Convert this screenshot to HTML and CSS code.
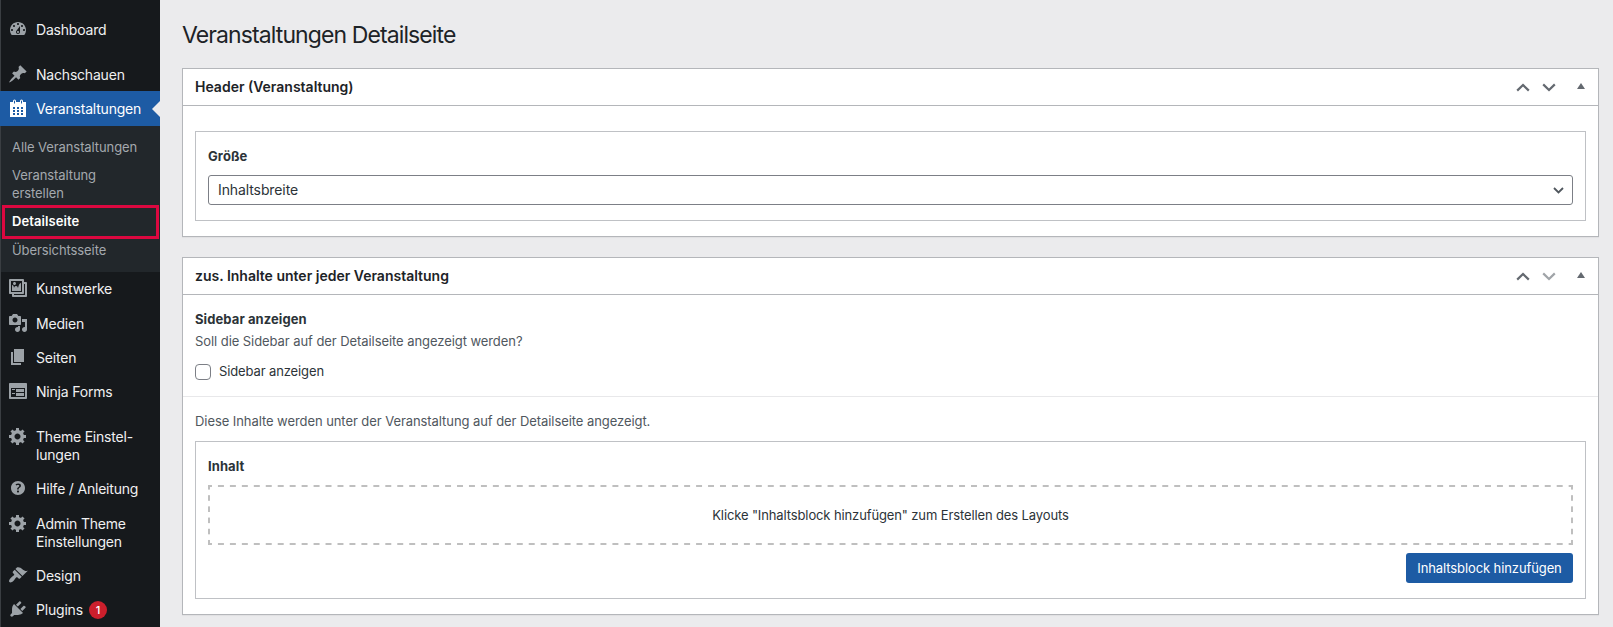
FILE: index.html
```html
<!DOCTYPE html>
<html lang="de">
<head>
  <meta charset="UTF-8">
  <title>Veranstaltungen Detailseite</title>
  <link rel="stylesheet" href="styles.css">
</head>
<body>

  <nav class="admin-menu">
    <ul class="menu">
      <li class="menu-item">
        <svg class="icon" viewBox="0 0 20 20"><path d="M3.76 16h12.48c1.1-1.37 1.76-3.11 1.76-5 0-4.42-3.58-8-8-8s-8 3.58-8 8c0 1.89.66 3.63 1.76 5zM10 4c.55 0 1 .45 1 1s-.45 1-1 1-1-.45-1-1 .45-1 1-1zM6 6c.55 0 1 .45 1 1s-.45 1-1 1-1-.45-1-1 .45-1 1-1zm8 0c.55 0 1 .45 1 1s-.45 1-1 1-1-.45-1-1 .45-1 1-1zm-5.37 5.55L12 7v6c0 1.1-.9 2-2 2s-2-.9-2-2c0-.57.24-1.08.63-1.45zM4 10c.55 0 1 .45 1 1s-.45 1-1 1-1-.45-1-1 .45-1 1-1zm12 0c.55 0 1 .45 1 1s-.45 1-1 1-1-.45-1-1 .45-1 1-1zm-5 3c0-.55-.45-1-1-1s-1 .45-1 1 .45 1 1 1 1-.45 1-1z"/></svg>
        <span>Dashboard</span>
      </li>
      <li class="separator small"></li>
      <li class="menu-item">
        <svg class="icon" viewBox="0 0 20 20"><path d="M10.44 3.02l1.82-1.82 6.36 6.35-1.83 1.82c-1.05-.68-2.48-.57-3.41.36l-.75.75c-.92.93-1.04 2.35-.35 3.41l-1.83 1.82-2.41-2.41-2.8 2.79c-.42.42-3.38 2.71-3.8 2.29s1.86-3.39 2.28-3.81l2.79-2.79L4.1 9.36l1.83-1.82c1.05.69 2.48.57 3.4-.36l.75-.75c.93-.92 1.05-2.35.36-3.41z"/></svg>
        <span>Nachschauen</span>
      </li>
      <li class="menu-item current">
        <svg class="icon" viewBox="0 0 20 20"><path fill-rule="evenodd" d="M15 4h3v15H2V4h3V3a1.5 1.5 0 0 1 3 0v1h4V3a1.5 1.5 0 0 1 3 0zM6 3v2.5h1V3a.5.5 0 0 0-1 0zm7 0v2.5h1V3a.5.5 0 0 0-1 0zM5 9h2v2H5zm4 0h2v2H9zm4 0h2v2h-2zM5 12h2v2H5zm4 0h2v2H9zm4 0h2v2h-2zM5 15h2v2H5zm4 0h2v2H9zm4 0h2v2h-2z"/></svg>
        <span>Veranstaltungen</span>
      </li>
    </ul>
    <ul class="submenu">
      <li>Alle Veranstaltungen</li>
      <li>Veranstaltung<br>erstellen</li>
      <li class="active">Detailseite</li>
      <li>Übersichtsseite</li>
    </ul>
    <ul class="menu">
      <li class="menu-item">
        <svg class="icon" viewBox="0 0 20 20"><path d="M16 4h1.96c.57 0 1.04.47 1.04 1.04v12.92c0 .57-.47 1.04-1.04 1.04H5.04C4.47 19 4 18.53 4 17.96V16H2.04C1.47 16 1 15.53 1 14.96V2.04C1 1.47 1.47 1 2.04 1h12.92c.57 0 1.04.47 1.04 1.04V4zM3 14h11V3H3v11zm5-8.5C8 4.67 7.33 4 6.5 4S5 4.67 5 5.5 5.67 7 6.5 7 8 6.33 8 5.5zm2 4.5s1-5 3-5v8H4V7c2 0 2 3 2 3s.33-2 2-2 2 2 2 2zm7 7V6h-1v8.96c0 .57-.47 1.04-1.04 1.04H6v1h11z"/></svg>
        <span>Kunstwerke</span>
      </li>
      <li class="menu-item">
        <svg class="icon" viewBox="0 0 20 20"><path d="M13 11V4c0-.55-.45-1-1-1h-1.67L9 1H5L3.67 3H2c-.55 0-1 .45-1 1v7c0 .55.45 1 1 1h10c.55 0 1-.45 1-1zM7 4.5c1.38 0 2.5 1.12 2.5 2.5S8.38 9.5 7 9.5 4.5 8.38 4.5 7 5.62 4.5 7 4.5zM14 6h5v10.5c0 1.38-1.12 2.5-2.5 2.5S14 17.88 14 16.5s1.12-2.5 2.5-2.5c.17 0 .34.02.5.05V9h-3V6zm-4 8.05V13h2v3.5c0 1.38-1.12 2.5-2.5 2.5S7 17.88 7 16.5 8.12 14 9.5 14c.17 0 .34.02.5.05z"/></svg>
        <span>Medien</span>
      </li>
      <li class="menu-item">
        <svg class="icon" viewBox="0 0 20 20"><path d="M6 15V2h10v13H6zm-1 1h8v2H3V5h2v11z"/></svg>
        <span>Seiten</span>
      </li>
      <li class="menu-item">
        <svg class="icon" viewBox="0 0 20 20"><path d="M2 2h16c.55 0 1 .45 1 1v14c0 .55-.45 1-1 1H2c-.55 0-1-.45-1-1V3c0-.55.45-1 1-1zm15 14V7H3v9h14zM4 8v1h3V8H4zm4 0v3h8V8H8zm-4 4v1h3v-1H4zm4 0v3h8v-3H8z"/></svg>
        <span>Ninja Forms</span>
      </li>
      <li class="separator"></li>
      <li class="menu-item">
        <svg class="icon" viewBox="0 0 20 20"><path d="M18 12h-2.18c-.17.7-.44 1.35-.81 1.93l1.54 1.54-2.1 2.1-1.54-1.54c-.58.36-1.23.63-1.91.79V19H8v-2.18c-.68-.16-1.33-.43-1.91-.79l-1.54 1.54-2.12-2.12 1.54-1.54c-.36-.58-.63-1.23-.79-1.91H1V9.03h2.17c.16-.7.44-1.35.8-1.94L2.43 5.55l2.1-2.1 1.54 1.54c.58-.37 1.24-.64 1.93-.81V2h3v2.18c.68.16 1.33.43 1.91.79l1.54-1.54 2.12 2.12-1.54 1.54c.36.59.64 1.24.8 1.94H18V12zm-8.5 1.5c1.66 0 3-1.34 3-3s-1.34-3-3-3-3 1.34-3 3 1.34 3 3 3z"/></svg>
        <span>Theme Einstel-<br>lungen</span>
      </li>
      <li class="menu-item">
        <svg class="icon" viewBox="0 0 20 20"><path d="M17 10c0-3.87-3.14-7-7-7-3.87 0-7 3.13-7 7s3.13 7 7 7c3.86 0 7-3.13 7-7zm-6.3 1.48H9.14v-.43c0-.38.08-.7.24-.98s.46-.57.88-.89c.41-.29.68-.53.81-.71.14-.18.2-.39.2-.62 0-.25-.09-.44-.28-.58-.19-.13-.45-.19-.79-.19-.58 0-1.25.15-2 .46l-.64-1.28c.87-.49 1.8-.74 2.77-.74.81 0 1.45.2 1.92.58.48.39.71.91.71 1.55 0 .43-.09.8-.29 1.11-.19.32-.57.67-1.11 1.06-.38.28-.61.49-.71.63-.1.15-.15.34-.15.57v.46zm-1.47 2.74c-.18-.17-.27-.42-.27-.73 0-.33.08-.58.26-.75s.43-.25.77-.25c.32 0 .57.09.75.26s.27.42.27.74c0 .3-.09.55-.27.72-.18.18-.43.27-.75.27-.33 0-.58-.09-.76-.26z"/></svg>
        <span>Hilfe / Anleitung</span>
      </li>
      <li class="menu-item">
        <svg class="icon" viewBox="0 0 20 20"><path d="M18 12h-2.18c-.17.7-.44 1.35-.81 1.93l1.54 1.54-2.1 2.1-1.54-1.54c-.58.36-1.23.63-1.91.79V19H8v-2.18c-.68-.16-1.33-.43-1.91-.79l-1.54 1.54-2.12-2.12 1.54-1.54c-.36-.58-.63-1.23-.79-1.91H1V9.03h2.17c.16-.7.44-1.35.8-1.94L2.43 5.55l2.1-2.1 1.54 1.54c.58-.37 1.24-.64 1.93-.81V2h3v2.18c.68.16 1.33.43 1.91.79l1.54-1.54 2.12 2.12-1.54 1.54c.36.59.64 1.24.8 1.94H18V12zm-8.5 1.5c1.66 0 3-1.34 3-3s-1.34-3-3-3-3 1.34-3 3 1.34 3 3 3z"/></svg>
        <span>Admin Theme<br>Einstellungen</span>
      </li>
      <li class="menu-item">
        <svg class="icon" viewBox="0 0 20 20"><path d="M14.48 11.06L7.41 3.99l1.5-1.5c.5-.56 2.3-.47 3.51.32 1.21.8 1.43 1.28 2.91 2.1 1.18.64 2.45 1.26 4.45.85zm-.71.71L6.7 4.7 4.93 6.47c-.39.39-.39 1.02 0 1.41l1.06 1.06c.39.39.39 1.03 0 1.42-.6.6-1.43 1.11-2.21 1.69-.35.26-.7.53-1.01.84C1.43 14.23.4 16.08 1.4 17.07c.99 1 2.84-.03 4.18-1.36.31-.31.58-.66.85-1.02.57-.78 1.08-1.61 1.69-2.21.39-.39 1.02-.39 1.41 0l1.06 1.06c.39.39 1.02.39 1.41 0z"/></svg>
        <span>Design</span>
      </li>
      <li class="menu-item">
        <svg class="icon" viewBox="0 0 20 20"><path d="M13.11 4.36L9.87 7.6 8 5.73l3.24-3.24c.35-.34 1.05-.2 1.56.32.52.51.66 1.21.31 1.55zm-8 1.77l.91-1.12 9.01 9.01-1.19.84c-.71.71-2.63 1.16-3.82 1.16H6.14L4.9 17.26c-.59.59-1.54.59-2.12 0-.59-.58-.59-1.53 0-2.12l1.24-1.24v-3.88c0-1.13.4-3.19 1.09-3.89zm7.26 3.97l3.24-3.24c.34-.35 1.04-.21 1.55.31.52.51.66 1.21.31 1.55l-3.24 3.25z"/></svg>
        <span>Plugins</span>
        <b class="badge">1</b>
      </li>
    </ul>
  </nav>

  <main class="content">
    <h1>Veranstaltungen Detailseite</h1>

    <section class="postbox">
      <header class="postbox-header">
        <h2>Header (Veranstaltung)</h2>
        <div class="handles">
          <svg viewBox="0 0 14 9"><path d="M1.2 7.6L7 2l5.8 5.6"/></svg>
          <svg viewBox="0 0 14 9"><path d="M1.2 1.4L7 7l5.8-5.6"/></svg>
          <i class="toggle"></i>
        </div>
      </header>
      <div class="group group-first">
        <strong class="field-label">Größe</strong>
        <div class="select">
          <span>Inhaltsbreite</span>
          <svg viewBox="0 0 11 7"><path d="M1 1l4.5 4.5L10 1"/></svg>
        </div>
      </div>
    </section>

    <section class="postbox">
      <header class="postbox-header">
        <h2>zus. Inhalte unter jeder Veranstaltung</h2>
        <div class="handles">
          <svg viewBox="0 0 14 9"><path d="M1.2 7.6L7 2l5.8 5.6"/></svg>
          <svg class="disabled" viewBox="0 0 14 9"><path d="M1.2 1.4L7 7l5.8-5.6"/></svg>
          <i class="toggle"></i>
        </div>
      </header>
      <div class="field">
        <strong class="field-label">Sidebar anzeigen</strong>
        <p class="description">Soll die Sidebar auf der Detailseite angezeigt werden?</p>
        <label class="check"><input type="checkbox"><span>Sidebar anzeigen</span></label>
      </div>
      <p class="description note">Diese Inhalte werden unter der Veranstaltung auf der Detailseite angezeigt.</p>
      <div class="group">
        <strong class="field-label">Inhalt</strong>
        <div class="dropzone">Klicke "Inhaltsblock hinzufügen" zum Erstellen des Layouts</div>
        <div class="actions"><button class="btn">Inhaltsblock hinzufügen</button></div>
      </div>
    </section>
  </main>

</body>
</html>
```

FILE: styles.css
```css
* {
  box-sizing: border-box;
}
body {
  display: flex;
  height: 627px;
  margin: 0;
  overflow: hidden;
  background: #ebebed;
  color: #2c3338;
  font-family: Inter, "Liberation Sans", sans-serif;
  font-size: 13px;
  line-height: 1.4;
  letter-spacing: -0.07px;
}
h1, h2, p, ul {
  margin: 0;
  padding: 0;
  list-style: none;
}

/* admin menu */
.admin-menu {
  flex: none;
  width: 160px;
  padding-top: 12.8px;
  background: #16191c;
  box-shadow: inset 1px 0 #3a3e42;
}
.menu-item {
  position: relative;
  display: flex;
  align-items: flex-start;
  padding: 8px 0 8px 8px;
  color: #f0f0f1;
  font-size: 14px;
  line-height: 18.2px;
  letter-spacing: -0.2px;
}
.icon {
  flex: none;
  width: 20px;
  height: 20px;
  margin: -2px 8px -2px 0;
  fill: #9ca2a7;
}
.separator {
  height: 10.8px;
}
.separator.small {
  height: 10.6px;
}
.current {
  height: 34.6px;
  padding-top: 8.4px;
  background: #1d5ba4;
  color: #fff;
}
.current .icon {
  fill: #fff;
}
.current::after {
  content: "";
  position: absolute;
  right: 0;
  top: 9.4px;
  border: 8px solid transparent;
  border-left: 0;
  border-right-color: #ebebed;
}
.menu-item + .current {
  margin-top: -0.6px;
}
.submenu {
  height: 146.6px;
  padding: 6.8px 0;
  background: #22272b;
  box-shadow: inset 1px 0 #3a3e42;
}
.submenu li {
  position: relative;
  padding: 5px 12px;
  color: #a4a9ae;
  line-height: 18.2px;
  letter-spacing: -0.09px;
}
.submenu .active {
  margin-bottom: 0.6px;
  color: #fff;
  font-weight: 600;
  letter-spacing: 0.08px;
}
.active::after {
  content: "";
  position: absolute;
  left: 2px;
  right: 1px;
  top: -2.6px;
  height: 28px;
  border: 3px solid #dc0840;
}
.badge {
  min-width: 18px;
  height: 18px;
  margin-left: 6px;
  border-radius: 9px;
  background: #cc1f2c;
  color: #fff;
  font-size: 11px;
  font-weight: 500;
  line-height: 18px;
  text-align: center;
}

/* page */
.content {
  flex: 1;
  padding: 20px 14px 0 22px;
}
h1 {
  margin-bottom: 18px;
  color: #1d2327;
  font-size: 23px;
  font-weight: 400;
  line-height: 30px;
  letter-spacing: -0.9px;
}
.postbox {
  height: 169px;
  margin-bottom: 20px;
  padding-bottom: 15px;
  border: 1px solid #b4b6ba;
  background: #fff;
  box-shadow: 0 1px 1px rgba(0,0,0,0.04);
}
.postbox + .postbox {
  height: 358px;
}
.postbox-header {
  display: flex;
  justify-content: space-between;
  align-items: center;
  height: 37px;
  padding: 0 13px 0 12px;
  border-bottom: 1px solid #b4b6ba;
}
h2 {
  color: #1d2327;
  font-size: 14px;
  font-weight: 600;
  letter-spacing: 0;
}
.handles {
  display: flex;
  align-items: center;
  gap: 12px;
}
.handles svg {
  width: 14px;
  height: 9px;
  fill: none;
  stroke: #646970;
  stroke-width: 2.2;
}
.handles .disabled {
  stroke: #a0a4a8;
}
.toggle {
  margin: -2px 0 0 9px;
  border: 4px solid transparent;
  border-top: 0;
  border-bottom: 6px solid #646970;
}
.group {
  margin: 0 12px;
  padding: 15px 12px;
  border: 1px solid #bfc1c5;
}
.group-first {
  height: 90px;
  margin-top: 25px;
}
.field-label {
  display: block;
  font-weight: 700;
  line-height: 19px;
  letter-spacing: 0.09px;
}
.select {
  display: flex;
  justify-content: space-between;
  align-items: center;
  height: 30px;
  margin-top: 9px;
  padding: 0 8px 0 9px;
  border: 1px solid #7c7f86;
  border-radius: 3px;
  font-size: 14px;
  letter-spacing: -0.1px;
}
.select svg {
  width: 11px;
  height: 7px;
  fill: none;
  stroke: #50575e;
  stroke-width: 1.8;
}
.field {
  height: 102px;
  padding: 15px 12px;
  border-bottom: 1px solid #e8e8ea;
}
.description {
  color: #50575e;
  line-height: 19px;
}
.field .description {
  margin-top: 3px;
}
.check {
  display: flex;
  align-items: center;
  gap: 8px;
  margin-top: 12px;
  letter-spacing: -0.12px;
}
.check span {
  margin: -1px 0 1px;
}
.check input {
  appearance: none;
  width: 16px;
  height: 16px;
  margin: 0;
  border: 1px solid #7c7f86;
  border-radius: 4px;
}
.note {
  padding: 15px 12px 10px;
}
/* wide dashes, the native dashed border is too dense */
.dropzone {
  --dash-x: linear-gradient(90deg, #bfbfbf 6px, transparent 6px);
  --dash-y: linear-gradient(#bfbfbf 6px, transparent 6px);
  height: 60px;
  margin-top: 9px;
  background:
    var(--dash-x) -2px 0 / 11.956px 2px repeat-x,
    var(--dash-x) -2px 100% / 11.956px 2px repeat-x,
    var(--dash-y) 0 -1px / 2px 11.2px repeat-y,
    var(--dash-y) 100% -1px / 2px 11.2px repeat-y;
  line-height: 60px;
  letter-spacing: -0.12px;
  text-align: center;
}
.actions {
  display: flex;
  justify-content: flex-end;
  margin-top: 8px;
}
.btn {
  width: 167px;
  height: 30px;
  padding: 0;
  border: 0;
  border-radius: 3px;
  background: #1d5ba4;
  color: #fff;
  font: 13px Inter, sans-serif;
  letter-spacing: -0.1px;
}
```
